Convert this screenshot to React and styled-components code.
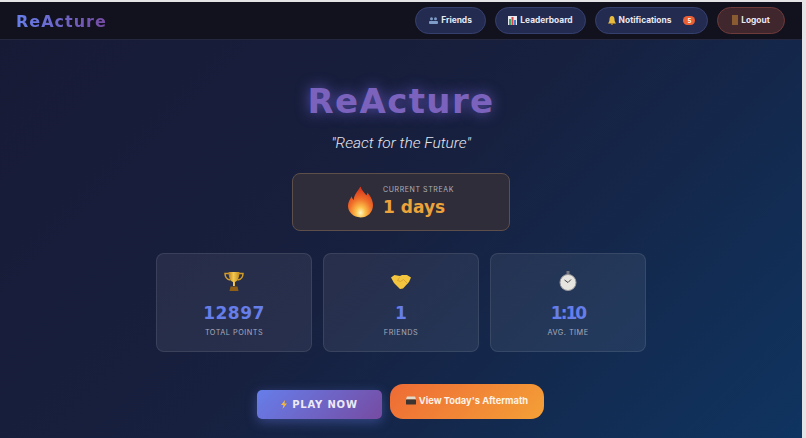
import React from "react";
import styled, { createGlobalStyle } from "styled-components";

const display = `"DejaVu Sans", "Liberation Sans", sans-serif`;
const body = `Roboto, "Liberation Sans", sans-serif`;
const ui = `Inter, "Liberation Sans", sans-serif`;

const GlobalStyle = createGlobalStyle`
  html, body {
    margin: 0;
    height: 100%;
    background: #e4e4e6;
  }
  body {
    overflow: hidden;
  }
`;

const Page = styled.div`
  box-sizing: border-box;
  width: 802px;
  height: 436px;
  margin-top: 2px;
  display: flex;
  flex-direction: column;
  background: linear-gradient(135deg, #171a35 0%, #17203f 50%, #0f3460 100%);
`;

const Header = styled.header`
  height: 38px;
  flex: none;
  box-sizing: border-box;
  display: flex;
  align-items: center;
  justify-content: space-between;
  padding: 0 17px 1px 16px;
  background: #12121f;
  border-bottom: 1px solid #25273f;
`;

const Logo = styled.div`
  margin-top: 2px;
  font: 700 16px ${display};
  letter-spacing: 1px;
  background: linear-gradient(90deg, #667eea, #764ba2);
  -webkit-background-clip: text;
  background-clip: text;
  color: transparent;
`;

const Nav = styled.nav`
  display: flex;
  align-items: center;
  gap: 9px;
`;

const NavButton = styled.button`
  height: 27px;
  box-sizing: border-box;
  width: ${(p) => p.$w}px;
  display: flex;
  align-items: center;
  justify-content: center;
  gap: 3px;
  padding: 0;
  border-radius: 14px;
  font: 700 8.4px ${ui};
  color: #e8e8f0;
  background: ${(p) => (p.$danger ? "#40262d" : "#232c50")};
  border: 1px solid ${(p) => (p.$danger ? "#6f3b3a" : "#36406e")};
`;

const Badge = styled.span`
  width: 12px;
  height: 9px;
  margin-left: 9px;
  border-radius: 5px;
  background: #ea5f35;
  color: #fff;
  font: 700 6px ${ui};
  line-height: 9px;
`;

const Main = styled.main`
  flex: 1;
  display: flex;
  flex-direction: column;
  align-items: center;
  padding-top: 41px;
`;

const Title = styled.h1`
  margin: 0;
  font: 700 34px/40px ${display};
  letter-spacing: 1.4px;
  color: #7b63bd;
  text-shadow: 0 0 14px rgba(118, 100, 220, 0.75);
`;

const Tagline = styled.p`
  margin: 12px 0 0;
  font: italic 300 15.5px/20px ${body};
  color: #e4e6ee;
`;

const Streak = styled.section`
  box-sizing: border-box;
  width: 218px;
  height: 58px;
  margin-top: 20px;
  display: flex;
  align-items: center;
  justify-content: center;
  gap: 10px;
  border-radius: 8px;
  background: #2f2d39;
  border: 1px solid #5f4f4a;
`;

const StreakText = styled.div`
  display: flex;
  flex-direction: column;
`;

const StreakLabel = styled.span`
  font: 400 7px/10px ${ui};
  letter-spacing: 0.6px;
  color: #aeb0ba;
`;

const StreakValue = styled.span`
  font: 700 17px/24px ${display};
  color: #eca33b;
`;

const Stats = styled.section`
  margin-top: 22px;
  display: grid;
  grid-template-columns: repeat(3, 156px);
  gap: 11px;
`;

const StatCard = styled.div`
  box-sizing: border-box;
  height: 99px;
  display: flex;
  flex-direction: column;
  align-items: center;
  padding-top: 16px;
  border-radius: 8px;
  background: rgba(255, 255, 255, 0.07);
  border: 1px solid rgba(255, 255, 255, 0.09);
`;

const IconSlot = styled.div`
  height: 22px;
  display: flex;
  align-items: center;
  justify-content: center;
`;

const StatValue = styled.div`
  margin-top: 10px;
  font: 700 17px/22px ${display};
  letter-spacing: ${(p) => p.$spacing}px;
  color: #667eea;
`;

const StatLabel = styled.div`
  margin-top: 4px;
  font: 400 7.3px/10px ${ui};
  letter-spacing: 0.5px;
  color: #a6abbd;
`;

const Actions = styled.div`
  margin: 32px 1px 0 0;
  display: flex;
  align-items: flex-start;
  gap: 8px;
`;

const PlayButton = styled.button`
  width: 125px;
  height: 29px;
  margin-top: 6px;
  display: flex;
  align-items: center;
  justify-content: center;
  gap: 5px;
  padding: 0;
  border: none;
  border-radius: 5px;
  font: 700 10px ${display};
  letter-spacing: 0.8px;
  color: #eceaf6;
  background: linear-gradient(135deg, #667eea, #764ba2);
  box-shadow: 0 3px 12px rgba(102, 126, 234, 0.4);
`;

const AftermathButton = styled.button`
  width: 154px;
  height: 35px;
  display: flex;
  align-items: center;
  justify-content: center;
  gap: 3px;
  padding: 0 0 2px;
  border: none;
  border-radius: 13px;
  font: 700 9.3px ${ui};
  color: #fdf3e6;
  background: linear-gradient(135deg, #ee6b35, #f4a037);
`;

const Icon = styled.svg`
  display: block;
  flex: none;
`;

const Fire = () => (
  <Icon width="25" height="32" viewBox="0 0 26 32">
    <defs>
      <radialGradient id="fire" cx="50%" cy="85%" r="75%">
        <stop offset="0" stopColor="#fff6c0" />
        <stop offset="0.25" stopColor="#fcc04a" />
        <stop offset="0.6" stopColor="#f0702a" />
        <stop offset="1" stopColor="#d93a1e" />
      </radialGradient>
    </defs>
    <path
      fill="url(#fire)"
      d="M13 0c1 4 4 6 6 9 1-1 1-2 1-3 3 3 6 8 6 13 0 8-6 13-13 13S0 27 0 20c0-4 2-7 4-10 0 2 1 3 2 4C6 9 10 5 13 0z"
    />
  </Icon>
);

const Trophy = () => (
  <Icon width="20" height="20" viewBox="0 0 20 20">
    <defs>
      <linearGradient id="gold" x1="0" x2="1" y1="0" y2="0">
        <stop offset="0" stopColor="#b97f18" />
        <stop offset="0.45" stopColor="#f3c851" />
        <stop offset="1" stopColor="#c08a1c" />
      </linearGradient>
    </defs>
    <path
      fill="none"
      stroke="#d09b28"
      strokeWidth="1.500"
      d="M5 2.500H1c0 4 2 6 5.500 6.500M15 2.500h4c0 4-2 6-5.500 6.500"
    />
    <path fill="url(#gold)" d="M4.500 1h11c0 5-1.500 9-4.500 10v4H9v-4C6 10 4.500 6 4.500 1z" />
    <path fill="#8f5f18" d="M6.500 15.500h7l1 4.500h-9z" />
  </Icon>
);

const Handshake = () => (
  <Icon width="20" height="15" viewBox="0 0 20 15">
    <path fill="#f4c63f" d="M0 3.500L3.500 1 9 2l2-1h5l4 2.500L18 8l-6 6.500-3 .5-6-6z" />
    <path fill="none" stroke="#cf9c2c" strokeWidth="0.800" d="M8.500 3.500l-2 3 3 1 3-2 4 4" />
  </Icon>
);

const Stopwatch = () => (
  <Icon width="18" height="20" viewBox="0 0 18 20">
    <rect x="7.500" y="0" width="3" height="3" fill="#77777f" />
    <circle cx="9" cy="11.500" r="8" fill="#e6e4de" stroke="#9a9a9e" />
    <path stroke="#44444c" strokeWidth="1" d="M9 11.500l3-3M9 11.500L5.500 9" />
  </Icon>
);

const Friends = () => (
  <Icon width="9" height="7" viewBox="0 0 9 7">
    <circle cx="2.500" cy="1.800" r="1.500" fill="#7e9cc8" />
    <circle cx="6.500" cy="1.800" r="1.500" fill="#7e9cc8" />
    <rect x="0" y="4" width="9" height="3" rx="1" fill="#7e9cc8" />
  </Icon>
);

const Chart = () => (
  <Icon width="9" height="9" viewBox="0 0 9 9">
    <rect width="9" height="9" fill="#e8eaf0" />
    <rect x="1" y="3" width="2" height="6" fill="#3fa56b" />
    <rect x="3.500" y="1" width="2" height="8" fill="#d8454a" />
    <rect x="6" y="4" width="2" height="5" fill="#3e7fd0" />
  </Icon>
);

const Bell = () => (
  <Icon width="8" height="9" viewBox="0 0 8 9">
    <path fill="#e9bb3c" d="M4 0c2 0 2.500 2 2.500 3.500S7 6 8 7.500H0C1 6 1.500 5 1.500 3.500S2 0 4 0z" />
    <circle cx="4" cy="8" r="1" fill="#b98a25" />
  </Icon>
);

const Door = () => (
  <Icon width="6" height="10" viewBox="0 0 6 10">
    <rect width="6" height="10" fill="#8a5a30" />
  </Icon>
);

const Bolt = () => (
  <Icon width="6" height="9" viewBox="0 0 6 9">
    <path fill="#f0b840" d="M4 0L0 5h2.500L1.500 9 6 3.500H3.500z" />
  </Icon>
);

const Clapper = () => (
  <Icon width="10" height="9" viewBox="0 0 11 9">
    <rect y="3" width="11" height="6" rx="1" fill="#3b3430" />
    <path fill="#e0d8c8" d="M1 0h9l1 3H0z" />
  </Icon>
);

const stats = [
  { icon: <Trophy />, value: "12897", label: "TOTAL POINTS", spacing: 0.5 },
  { icon: <Handshake />, value: "1", label: "FRIENDS", spacing: 0 },
  { icon: <Stopwatch />, value: "1:10", label: "AVG. TIME", spacing: -2 },
];

const App = () => {
  return (
    <Page>
      <GlobalStyle />
      <Header>
        <Logo>ReActure</Logo>
        <Nav>
          <NavButton $w={71}>
            <Friends /> Friends
          </NavButton>
          <NavButton $w={91}>
            <Chart /> Leaderboard
          </NavButton>
          <NavButton $w={113}>
            <Bell /> Notifications <Badge>5</Badge>
          </NavButton>
          <NavButton $w={68} $danger>
            <Door /> Logout
          </NavButton>
        </Nav>
      </Header>
      <Main>
        <Title>ReActure</Title>
        <Tagline>"React for the Future"</Tagline>
        <Streak>
          <Fire />
          <StreakText>
            <StreakLabel>CURRENT STREAK</StreakLabel>
            <StreakValue>1 days</StreakValue>
          </StreakText>
        </Streak>
        <Stats>
          {stats.map((s) => (
            <StatCard key={s.label}>
              <IconSlot>{s.icon}</IconSlot>
              <StatValue $spacing={s.spacing}>{s.value}</StatValue>
              <StatLabel>{s.label}</StatLabel>
            </StatCard>
          ))}
        </Stats>
        <Actions>
          <PlayButton>
            <Bolt /> PLAY NOW
          </PlayButton>
          <AftermathButton>
            <Clapper /> View Today's Aftermath
          </AftermathButton>
        </Actions>
      </Main>
    </Page>
  );
};

export default App;
